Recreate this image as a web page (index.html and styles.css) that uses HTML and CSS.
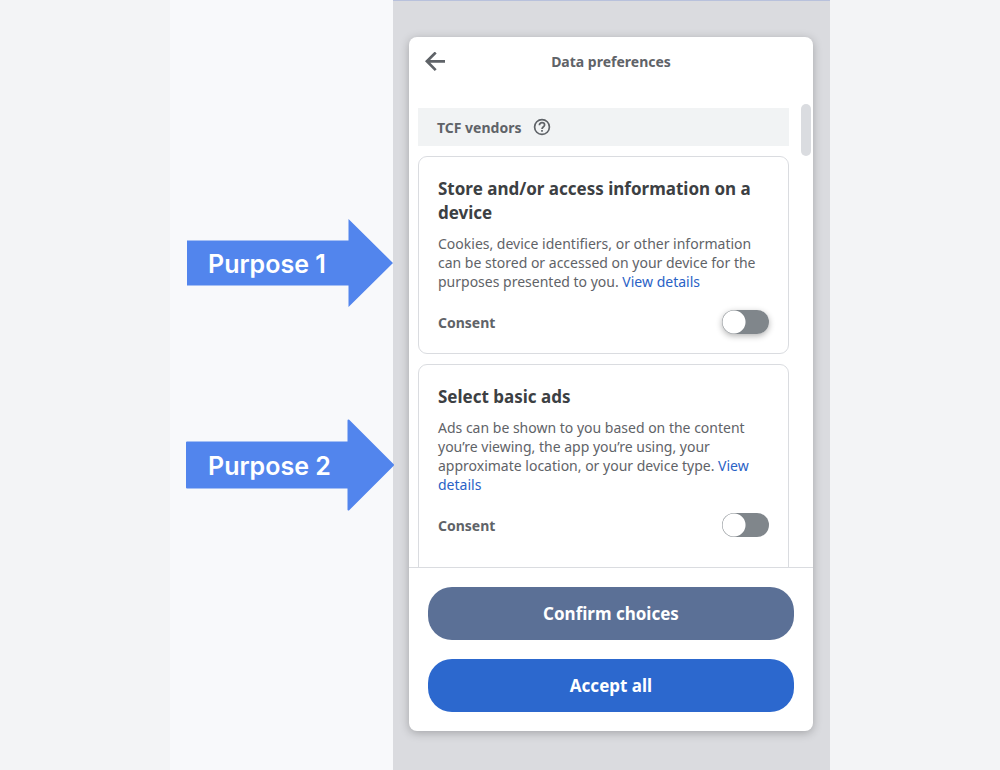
FILE: index.html
```html
<!DOCTYPE html>
<html lang="en">
<head>
    <meta charset="UTF-8">
    <meta name="viewport" content="width=device-width, initial-scale=1.0">
    <title>Data preferences</title>
    <link rel="stylesheet" href="styles.css">
</head>
<body>
    <div class="stage">
        <div class="notes">
            <div class="arrow">
                <svg class="arrow-shape" width="206" height="88" viewBox="0 0 206 88">
                    <path d="M0 21.500H161.500V0L206 44L161.500 88V66.500H0Z" fill="#5285ed"/>
                </svg>
                <span class="arrow-label">Purpose 1</span>
            </div>
            <div class="arrow">
                <svg class="arrow-shape" width="206" height="92" viewBox="1 0 206 92">
                    <path d="M1 23.500H162.500V1.500L207 46L162.500 90.500V68.500H1Z" fill="#5285ed" stroke="#5285ed" stroke-width="2" stroke-linejoin="round"/>
                </svg>
                <span class="arrow-label">Purpose 2</span>
            </div>
        </div>

        <div class="phone">
            <div class="dialog">
                <header class="header">
                    <button class="back" aria-label="Back">
                        <svg width="20" height="20" viewBox="0 0 20 20" fill="none" stroke="#5f6368" stroke-width="2.700">
                            <path d="M10.700 0.500L1.900 9.300L10.700 18.100M2 9.300H20"/>
                        </svg>
                    </button>
                    <h1>Data preferences</h1>
                </header>

                <main class="content">
                    <div class="vendors">
                        <span>TCF vendors</span>
                        <button class="help" aria-label="Help">
                            <svg width="18" height="18" viewBox="0 0 18 18" fill="none" stroke="#5f6368" stroke-width="1.700">
                                <circle cx="9" cy="9" r="7.400"/>
                                <path d="M6.400 7.200C6.400 5.600 7.500 4.700 9 4.700S11.600 5.700 11.600 7C11.600 8.700 9 8.900 9 11.100"/>
                                <path d="M9 12V13.700"/>
                            </svg>
                        </button>
                    </div>

                    <section class="card">
                        <h2>Store and/or access information on a device</h2>
                        <p>Cookies, device identifiers, or other information can be stored or accessed on your device for the purposes presented to you. <a href="#">View details</a></p>
                        <div class="consent">
                            <label for="consent-1">Consent</label>
                            <input type="checkbox" class="toggle toggle-raised" id="consent-1">
                        </div>
                    </section>

                    <section class="card">
                        <h2>Select basic ads</h2>
                        <p>Ads can be shown to you based on the content you’re viewing, the app you’re using, your approximate location, or your device type. <a href="#">View details</a></p>
                        <div class="consent">
                            <label for="consent-2">Consent</label>
                            <input type="checkbox" class="toggle" id="consent-2">
                        </div>
                    </section>
                    <div class="scroll-thumb"></div>
                </main>

                <footer class="footer">
                    <button class="btn btn-confirm">Confirm choices</button>
                    <button class="btn btn-accept">Accept all</button>
                </footer>
            </div>
        </div>
    </div>
</body>
</html>
```
FILE: styles.css
```css
* {
    margin: 0;
    padding: 0;
    box-sizing: border-box;
}

body {
    font-family: 'Noto Sans', 'Open Sans', sans-serif;
    font-size: 14px;
    color: #5f6368;
    background: #f3f4f6;
}

button {
    font-family: inherit;
    border: none;
    background: none;
    cursor: pointer;
}

svg {
    display: block;
}

.stage {
    display: flex;
    max-width: 660px;
    height: 100vh;
    min-height: 600px;
    margin: 0 auto;
    background: #f8f9fb;
}

/* Arrows */
.notes {
    flex: 1;
    display: flex;
    flex-direction: column;
    align-items: flex-end;
    gap: 112px;
    padding-top: 219px;
    z-index: 1;
}

.arrow {
    display: grid;
    align-items: center;
}

.arrow-shape,
.arrow-label {
    grid-area: 1 / 1;
}

.arrow-shape {
    overflow: visible;
}

.arrow-label {
    padding: 2px 0 0 21px;
    font-family: Inter, sans-serif;
    font-size: 25px;
    font-weight: 600;
    color: #fff;
}

/* Phone */
.phone {
    display: flex;
    width: 437px;
    padding: 36px 17px 39px 16px;
    border-top: 1px solid #b8c1dc;
    background: #dadbdf;
}

.dialog {
    flex: 1;
    display: flex;
    flex-direction: column;
    background: #fff;
    border-radius: 8px;
    box-shadow: 0 2px 10px rgba(0, 0, 0, 0.25);
    overflow: hidden;
}

.header {
    display: grid;
    grid-template-columns: 20px 1fr 20px;
    align-items: center;
    height: 49px;
    margin-bottom: 18px;
    padding: 0 16px;
}

.header h1 {
    font-size: 14px;
    font-weight: 700;
    text-align: center;
}

.content {
    flex: 1;
    position: relative;
    min-height: 0;
    padding: 4px 24px 0 9px;
    overflow: hidden;
}

.scroll-thumb {
    position: absolute;
    top: 0;
    right: 2px;
    width: 10px;
    height: 52px;
    border-radius: 5px;
    background: #dadce0;
}

.vendors {
    display: flex;
    align-items: center;
    gap: 12px;
    height: 38px;
    padding: 0 19px;
    font-weight: 700;
    background: #f1f3f4;
}

.card {
    margin-top: 10px;
    padding: 20px 19px 19px;
    border: 1px solid #dadce0;
    border-radius: 9px;
}

.card + .card {
    padding-bottom: 60px;
}

.card h2 {
    margin-bottom: 9px;
    font-size: 17px;
    font-weight: 700;
    line-height: 24px;
    color: #3c4043;
}

.card p {
    margin-bottom: 19px;
    line-height: 19px;
}

.card a {
    color: #2a62c6;
    text-decoration: none;
}

.consent {
    display: flex;
    align-items: center;
    justify-content: space-between;
    height: 24px;
    font-weight: 700;
}

.toggle {
    appearance: none;
    width: 47px;
    height: 24px;
    border-radius: 12px;
    background: radial-gradient(circle at 12px 12px, #fff 11px, #80868b 12px);
    cursor: pointer;
}

.toggle:checked {
    background: radial-gradient(circle at 35px 12px, #fff 11px, #2c68ce 12px);
}

.toggle-raised {
    box-shadow: 0 2px 6px rgba(0, 0, 0, 0.3);
}

/* Footer buttons */
.footer {
    display: flex;
    flex-direction: column;
    gap: 19px;
    padding: 19px;
    border-top: 1px solid #dadce0;
}

.btn {
    height: 53px;
    border-radius: 24px;
    font-size: 17px;
    font-weight: 700;
    color: #fff;
}

.btn-confirm {
    background: #5b7096;
}

.btn-accept {
    background: #2c68ce;
}
```
